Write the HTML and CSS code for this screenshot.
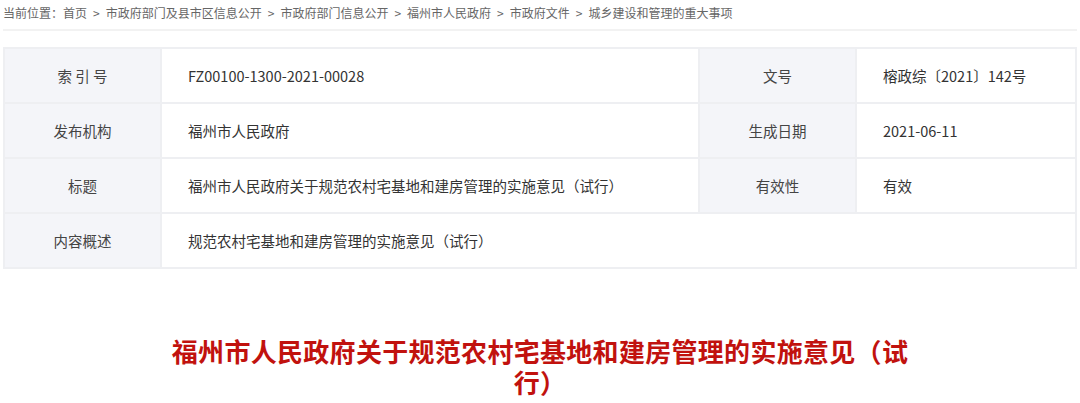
FILE: index.html
```html
<!DOCTYPE html>
<html lang="zh-CN">
<head>
  <meta charset="UTF-8" />
  <meta name="viewport" content="width=device-width, initial-scale=1.0" />
  <title>福州市人民政府关于规范农村宅基地和建房管理的实施意见（试行）</title>
  <link rel="stylesheet" href="styles.css">
</head>
<body>
  <div class="page">
    <div class="crumbs">
      当前位置：<a href="#">首页</a><span class="sep">&gt;</span><a href="#">市政府部门及县市区信息公开</a><span class="sep">&gt;</span><a href="#">市政府部门信息公开</a><span class="sep">&gt;</span><a href="#">福州市人民政府</a><span class="sep">&gt;</span><a href="#">市政府文件</a><span class="sep">&gt;</span><a href="#">城乡建设和管理的重大事项</a>
    </div>

    <table class="info">
      <colgroup>
        <col class="c-label" />
        <col class="c-value" />
        <col class="c-label" />
        <col class="c-value2" />
      </colgroup>
      <tr>
        <th>索 引 号</th>
        <td>FZ00100-1300-2021-00028</td>
        <th>文号</th>
        <td>榕政综〔2021〕142号</td>
      </tr>
      <tr>
        <th>发布机构</th>
        <td>福州市人民政府</td>
        <th>生成日期</th>
        <td>2021-06-11</td>
      </tr>
      <tr>
        <th>标题</th>
        <td>福州市人民政府关于规范农村宅基地和建房管理的实施意见（试行）</td>
        <th>有效性</th>
        <td>有效</td>
      </tr>
      <tr>
        <th>内容概述</th>
        <td colspan="3">规范农村宅基地和建房管理的实施意见（试行）</td>
      </tr>
    </table>

    <h1 class="doc-title">福州市人民政府关于规范农村宅基地和建房管理的实施意见（试行）</h1>
  </div>
</body>
</html>
```

FILE: styles.css
```css
body {
  margin: 0;
  background: #fff;
  color: #333;
  font-family: "Noto Sans CJK SC", "Noto Sans", sans-serif;
}

.page {
  padding: 0 3px;
}

.crumbs {
  font-size: 12px;
  line-height: 26px;
  color: #666;
  padding-bottom: 3px;
  border-bottom: 2px solid #f2f2f2;
}

.crumbs a {
  color: #666;
  text-decoration: none;
}

.crumbs .sep {
  margin: 0 6px;
}

.info {
  width: 100%;
  margin-top: 16px;
  border-collapse: collapse;
  font-size: 14.5px;
}

.c-label {
  width: 157px;
}

.c-value {
  width: 538px;
}

.info th,
.info td {
  height: 53px;
  border: 2px solid #eeeff2;
  padding: 0;
}

.info th {
  background: #f4f5f9;
  font-weight: normal;
  text-align: center;
  color: #444;
}

.info td {
  text-align: left;
  padding-left: 26px;
}

.doc-title {
  max-width: 752px;
  margin: 66px auto 0;
  text-align: center;
  color: #c1120e;
  font-size: 26px;
  letter-spacing: 0.3px;
  line-height: 31px;
  font-weight: bold;
}
```
